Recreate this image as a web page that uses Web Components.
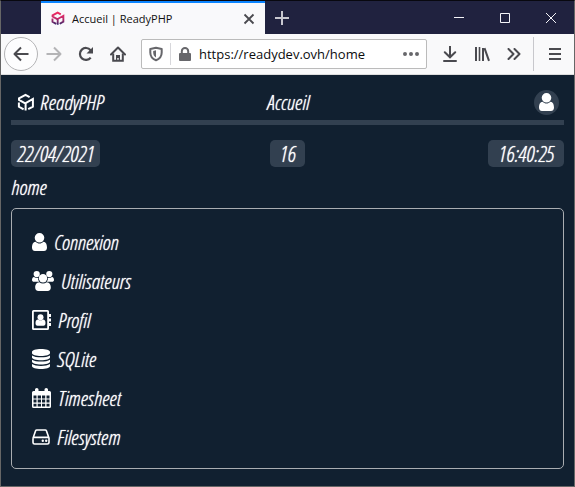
<!DOCTYPE html>
<html lang="fr">
<head>
<meta charset="utf-8">
<meta name="viewport" content="width=device-width, initial-scale=1">
<title>Accueil | ReadyPHP</title>
<style>
html, body { height: 100%; margin: 0; }
body { background: #112030; font-family: "Open Sans", "Noto Sans", sans-serif; }
</style>
</head>
<body>
<browser-window>
  <tab-strip slot="tabs" label="Accueil | ReadyPHP"></tab-strip>
  <nav-bar slot="nav" url="https://readydev.ovh/home"></nav-bar>
  <ready-app>
    <app-header brand="ReadyPHP" heading="Accueil"></app-header>
    <status-row>
      <info-pill>22/04/2021</info-pill>
      <info-pill class="wide">16</info-pill>
      <info-pill class="wide">16:40:25</info-pill>
    </status-row>
    <page-name>home</page-name>
    <menu-panel>
      <menu-entry icon="user" href="#connexion">Connexion</menu-entry>
      <menu-entry icon="users" href="#utilisateurs">Utilisateurs</menu-entry>
      <menu-entry icon="book" href="#profil">Profil</menu-entry>
      <menu-entry icon="database" href="#sqlite">SQLite</menu-entry>
      <menu-entry icon="calendar" href="#timesheet">Timesheet</menu-entry>
      <menu-entry icon="disk" href="#filesystem">Filesystem</menu-entry>
    </menu-panel>
  </ready-app>
</browser-window>
<script>
const line = (w, d, extra = '') => `<path fill="none" stroke="currentColor" stroke-width="${w}" ${extra} d="${d}"/>`;
const fill = d => `<path fill="currentColor" fill-rule="evenodd" d="${d}"/>`;
const CUBE = 'M12.6 4.2 L8.5 1.9 L2 5.4 V7 L8.6 10.6 V17.6 M1.9 9.6 V13.6 L6.6 16.4 M8.6 10.2 L15.9 6 V13.6 L11.2 16.2';
const USER = 'M7.5 0a4.8 4.8 0 0 1 0 9.6a4.8 4.8 0 0 1 0-9.6zM3.6 8.8C5.8 11.2 9.2 11.2 11.4 8.8C14 9 15 11.6 15 14.7C15 16.7 13.6 18 12 18H3C1.4 18 0 16.7 0 14.7C0 11.6 1 9 3.6 8.8z';
const ICONS = {
  cube: [18, 19, line(2, CUBE)],
  cubeColor: [18, 19, `<defs><linearGradient id="g" gradientUnits="userSpaceOnUse" x1="0" y1="2" x2="0" y2="18"><stop offset="0" stop-color="#f0285f"/><stop offset=".45" stop-color="#c42c6c"/><stop offset="1" stop-color="#2b2468"/></linearGradient></defs><path fill="none" stroke="url(#g)" stroke-width="2.4" d="${CUBE}"/>`],
  tabClose: [12, 12, line(1.8, 'M1.5 1.5 10.5 10.5 M10.5 1.5 1.5 10.5')],
  plus: [16, 16, line(2, 'M8 1V15 M1 8H15')],
  min: [12, 12, line(1, 'M1 5.5H11')],
  max: [12, 12, line(1, 'M1.5 1.5H10.5V10.5H1.5z')],
  close: [12, 12, line(1, 'M1 1 11 11 M11 1 1 11')],
  back: [16, 16, line(2, 'M15.5 8H1.5 M8 1.5 1.5 8 8 14.5', 'stroke-linejoin="round"')],
  forward: [16, 16, line(2, 'M.5 8H14.5 M8 1.5 14.5 8 8 14.5', 'stroke-linejoin="round"')],
  reload: [16, 16, line(2.2, 'M12.7 11.6A6 6 0 1 1 12.6 4.2') + fill('M15 1V7.5H8.5z')],
  home: [16, 16, line(2, 'M1 8.5 8 1.5 15 8.5', 'stroke-linecap="round" stroke-linejoin="round"') + line(2, 'M3.2 7.5V14.8H12.8V7.5') + fill('M6 9H10V15H8.7V12H7.3V15H6z')],
  shield: [14, 16, line(2, 'M7 1.8 12.7 3V6.5C12.7 10.5 10.5 12.9 7 14.2C3.5 12.9 1.3 10.5 1.3 6.5V3z', 'stroke-linejoin="round"') + fill('M7 4.3V11.4C5.1 10.4 4.2 8.8 4.2 6.5V4.9z')],
  lock: [12, 14, fill('M1 6H11Q12 6 12 7V13Q12 14 11 14H1Q0 14 0 13V7Q0 6 1 6z') + line(2, 'M2.8 7V4.3A3.2 3.2 0 0 1 9.2 4.3V7')],
  dots: [16, 4, fill('M2 0a2 2 0 1 1 0 4a2 2 0 1 1 0-4zM8 0a2 2 0 1 1 0 4a2 2 0 1 1 0-4zM14 0a2 2 0 1 1 0 4a2 2 0 1 1 0-4z')],
  download: [14, 16, line(2, 'M7 0V11 M1.8 6.2 7 11.3 12.2 6.2 M1 15H13', 'stroke-linecap="round"')],
  library: [16, 16, line(2, 'M2 1V15 M9 2V15 M10.5 2.2 15 14.8') + line(1.6, 'M5.5 1V15')],
  more: [14, 12, line(2, 'M1.5 1 6.5 6 1.5 11 M7.5 1 12.5 6 7.5 11', 'stroke-linecap="round" stroke-linejoin="round"')],
  menu: [12, 12, line(2, 'M0 1H12 M0 6H12 M0 11H12')],
  user: [15, 18, fill(USER)],
  users: [22, 20, fill('M4.7 0a3.1 3.1 0 1 1 0 6.2a3.1 3.1 0 1 1 0-6.2zM17.3 0a3.1 3.1 0 1 1 0 6.2a3.1 3.1 0 1 1 0-6.2zM2 6C3.7 7.2 5 7.2 6 6.8C6 8.5 6.5 9.8 7.4 10.8H2C.8 10.8 0 10.2 0 9C0 7.6.6 6 2 6zM20 6C18.3 7.2 17 7.2 16 6.8C16 8.5 15.5 9.8 14.6 10.8H20C21.2 10.8 22 10.2 22 9C22 7.6 21.4 6 20 6z') + `<circle cx="11" cy="7.2" r="4.2" fill="currentColor"/>` + fill('M7.3 11.2C9.5 13 12.5 13 14.7 11.2C17.6 11.4 18.8 13.8 18.8 16.5C18.8 18.8 17.6 20 15.6 20H6.4C4.4 20 3.2 18.8 3.2 16.5C3.2 13.8 4.4 11.4 7.3 11.2z')],
  book: [19, 20, fill('M1.5 0H15.5Q17 0 17 1.5V18.5Q17 20 15.5 20H1.5Q0 20 0 18.5V1.5Q0 0 1.5 0zM1.8 1.8V18.2H15.2V1.8zM17 4H19V7H17zM17 8.5H19V11.5H17zM17 13H19V16H17z') + `<circle cx="8.5" cy="7.2" r="3" fill="currentColor"/>` + fill('M6 9.4Q8.5 11.3 11 9.4Q13.5 9.6 13.5 13Q13.5 15.8 11.5 15.8H5.5Q3.5 15.8 3.5 13Q3.5 9.6 6 9.4z')],
  database: [18, 20, fill('M9 0C14 0 18 1.2 18 3V4.2C18 5.8 14 7 9 7S0 5.8 0 4.2V3C0 1.2 4 0 9 0zM0 6.4C3.5 8.9 14.5 8.9 18 6.4V8.5C18 10.1 14 11.3 9 11.3S0 10.1 0 8.5zM0 10.7C3.5 13.2 14.5 13.2 18 10.7V12.8C18 14.4 14 15.6 9 15.6S0 14.4 0 12.8zM0 15C3.5 17.5 14.5 17.5 18 15V17C18 18.8 14 20 9 20S0 18.8 0 17z')],
  calendar: [19, 20, fill('M1.5 3H3V1.5Q3 0 4.8 0Q6.5 0 6.5 1.5V3H12.5V1.5Q12.5 0 14.2 0Q16 0 16 1.5V3H17.5Q19 3 19 4.5V18.5Q19 20 17.5 20H1.5Q0 20 0 18.5V4.5Q0 3 1.5 3zM1.5 7.5V10.5H4.5V7.5zM5.7 7.5V10.5H9V7.5zM10 7.5V10.5H13.2V7.5zM14.5 7.5V10.5H17.5V7.5zM1.5 11.6V14.6H4.5V11.6zM5.7 11.6V14.6H9V11.6zM10 11.6V14.6H13.2V11.6zM14.5 11.6V14.6H17.5V11.6zM1.5 15.7V18.5H4.5V15.7zM5.7 15.7V18.5H9V15.7zM10 15.7V18.5H13.2V15.7zM14.5 15.7V18.5H17.5V15.7z')],
  disk: [18, 16, line(1.6, 'M1 9.2 3.6 1.8Q3.9 1 4.8 1H13.2Q14.1 1 14.4 1.8L17 9.2V13.4Q17 15 15.4 15H2.6Q1 15 1 13.4V9.2Q1 8.4 2.2 8.4H15.8Q17 8.4 17 9.2') + `<circle cx="10.8" cy="11.8" r="1.2" fill="currentColor"/><circle cx="14.2" cy="11.8" r="1.2" fill="currentColor"/>`]
};
const svg = (name, scale = 1) => {
  const [w, h, body] = ICONS[name];
  return `<svg width="${Math.round(w * scale)}" height="${Math.round(h * scale)}" viewBox="0 0 ${w} ${h}" aria-hidden="true">${body}</svg>`;
};
const RESET = `*{box-sizing:border-box} svg{display:block;flex:none} button{appearance:none;border:0;margin:0;padding:0;background:none;color:inherit;font:inherit;display:grid;place-items:center;flex:none} a{color:inherit;text-decoration:none}`;
const define = (name, css, html) => customElements.define(name, class extends HTMLElement {
  connectedCallback() {
    if (this.shadowRoot) return;
    this.attachShadow({ mode: 'open' }).innerHTML = `<style>${RESET}${css}</style>${html(this)}`;
  }
});
const button = (icon, label, cls = '') => `<button type="button" class="${cls}" aria-label="${label}">${svg(icon)}</button>`;

define('browser-window',
  `:host{box-sizing:border-box;display:flex;flex-direction:column;min-height:100vh;border:1px solid #666;border-top-color:#08080f;background:#112030}`,
  () => `<slot name="tabs"></slot><slot name="nav"></slot><slot></slot>`);

define('tab-strip',
  `:host{display:flex;height:33px;background:#20223f;color:#f4f4f8;padding-left:40px}
   .tab{display:flex;align-items:center;gap:7px;width:224px;background:#f9f9fb;color:#111;border-top:2px solid #0a84ff;padding:0 10px;font-size:11px}
   .label{flex:1;white-space:nowrap}
   .x{color:#4a4a4f}
   .new{width:34px;color:#c8c8d0}
   .controls{display:flex;margin-left:auto}
   .controls button{width:46px}`,
  el => `<div class="tab">${svg('cubeColor', .8)}<span class="label">${el.getAttribute('label')}</span>${button('tabClose', "Fermer l'onglet", 'x')}</div>
    ${button('plus', 'Nouvel onglet', 'new')}
    <div class="controls">${button('min', 'Réduire')}${button('max', 'Agrandir')}${button('close', 'Fermer')}</div>`);

define('nav-bar',
  `:host{display:flex;align-items:center;height:40px;background:#f9f9fa;border-bottom:1px solid #ddd;color:#4a4a4f;padding:0 3px}
   button{width:32px;height:32px}
   .back{width:34px;height:34px;border:1px solid #b4b4b6;border-radius:50%;background:#fdfdfe}
   .off{color:#b4b4b6}
   .field{display:flex;align-items:center;flex:1;min-width:0;height:30px;margin:0 7px;border:1px solid #bbb;border-radius:2px;background:#fff;padding-left:7px;color:#67676b}
   .sep{width:1px;height:22px;background:#d7d7db;margin:0 8px 0 7px}
   input{flex:1;min-width:0;border:0;outline:0;background:none;padding:0;margin-left:8px;font:13px "Open Sans","Noto Sans",sans-serif;color:#0c0c0d}
   .dots{width:30px;height:28px}
   .rule{width:1px;height:34px;background:#c8c8cc;margin:0 5px 0 3px}`,
  el => `${button('back', 'Précédent', 'back')}${button('forward', 'Suivant', 'off')}${button('reload', 'Actualiser')}${button('home', 'Accueil')}
    <div class="field">${svg('shield')}<span class="sep"></span>${svg('lock')}<input type="text" aria-label="Adresse" value="${el.getAttribute('url')}">${button('dots', 'Actions', 'dots')}</div>
    ${button('download', 'Téléchargements')}${button('library', 'Bibliothèque')}${button('more', 'Plus')}<span class="rule"></span>${button('menu', 'Menu')}`);

define('ready-app',
  `:host{display:flex;flex-direction:column;flex:1;padding:12px 10px 16px;color:#fff;text-shadow:0 0 1px #fff;font:italic 300 21px/26px "Open Sans Condensed Light","Liberation Sans Narrow","Open Sans Condensed","Liberation Sans",sans-serif}`,
  () => `<slot></slot>`);

define('app-header',
  `:host{display:grid;grid-template-columns:1fr auto 1fr;align-items:center;border-bottom:5px solid #324050;height:30px;padding:0 5px 3px 6px}
   .brand{display:flex;align-items:center;gap:5px}
   h1{font:inherit;margin:0}
   button{justify-self:end;width:25px;height:25px;border-radius:50%;background:#324050}`,
  el => `<a class="brand" href="#home">${svg('cube')}<span>${el.getAttribute('brand')}</span></a><h1>${el.getAttribute('heading')}</h1>${button('user', 'Compte')}`);

define('status-row',
  `:host{display:grid;grid-template-columns:1fr auto 1fr;justify-items:start;margin-top:15px}
   ::slotted(:last-child){justify-self:end}`,
  () => `<slot></slot>`);

define('info-pill',
  `:host{display:block;background:#324050;border-radius:5px;padding:0 6px;font-size:22px;line-height:27px;height:27px}
   :host(.wide){padding:0 10px}`,
  () => `<slot></slot>`);

define('page-name', `:host{display:block;margin:7px 0 8px}`, () => `<slot></slot>`);

define('menu-panel',
  `:host{display:flex;flex-direction:column;gap:13px;border:1px solid #a9adb1;border-radius:5px;padding:20px 20px 18px}`,
  () => `<slot></slot>`);

define('menu-entry',
  `:host{display:flex} a{display:flex;align-items:center;gap:7px;height:26px}`,
  el => `<a href="${el.getAttribute('href')}">${svg(el.getAttribute('icon'))}<span><slot></slot></span></a>`);
</script>
</body>
</html>
